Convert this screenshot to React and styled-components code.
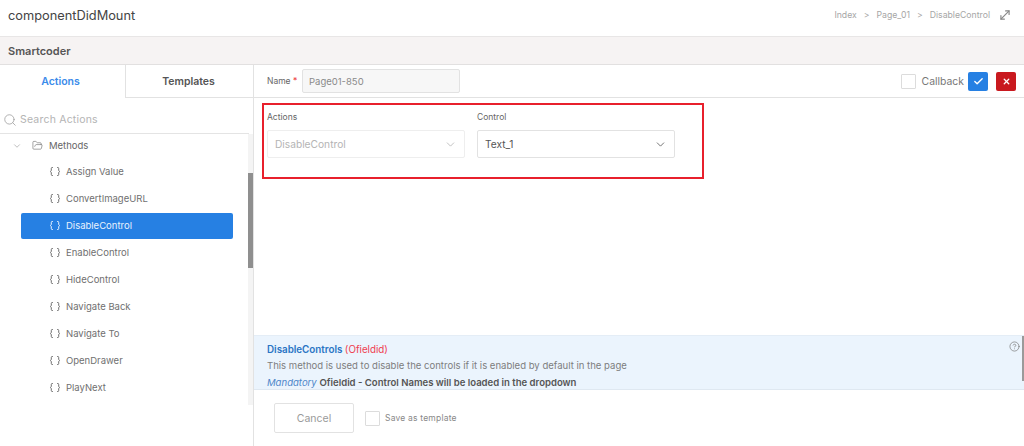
import React from "react";
import styled, { createGlobalStyle } from "styled-components";
import { ChevronDown, Check, X, Search, FolderOpen, MoveDiagonal, CircleHelp } from "lucide-react";

const Global = createGlobalStyle`
  html, body { margin: 0; padding: 0; background: #fff; }
  body { font-family: Inter, "Liberation Sans", sans-serif; color: #555; }
  * { box-sizing: border-box; }
`;

const Page = styled.div`
  width: 1024px;
  height: 446px;
  overflow: hidden;
  display: flex;
  flex-direction: column;
`;
const Header = styled.div`
  height: 37px;
  flex: none;
  display: flex;
  align-items: center;
  justify-content: space-between;
  padding: 0 12px 6px 8px;
  border-bottom: 1px solid #e8e6e6;
`;
const Title = styled.div`
  font-size: 12.8px;
  color: #444;
`;
const Crumbs = styled.div`
  display: flex;
  align-items: center;
  font-size: 8.7px;
  color: #a6a6a6;
  gap: 7px;
  & svg { margin-left: 1px; }
`;
const SubHeader = styled.div`
  height: 28px;
  flex: none;
  display: flex;
  align-items: center;
  padding-left: 8px;
  background: #f6f3f3;
  border-bottom: 1px solid #e2e0e0;
  font-size: 11px;
  font-weight: 600;
  color: #555;
`;
const Body = styled.div`
  flex: 1;
  display: flex;
  min-height: 0;
`;
const Sidebar = styled.div`
  width: 254px;
  flex: none;
  border-right: 1px solid #e2e2e2;
  display: flex;
  flex-direction: column;
`;
const Tabs = styled.div`
  height: 33px;
  flex: none;
  display: flex;
`;
const Tab = styled.div`
  width: ${(p) => (p.$active ? "126px" : "127px")};
  display: flex;
  align-items: center;
  justify-content: center;
  padding-right: ${(p) => (p.$active ? "4px" : "2px")};
  font-size: 10.5px;
  font-weight: 600;
  color: ${(p) => (p.$active ? "#3a8bea" : "#555")};
  border-right: ${(p) => (p.$active ? "1px solid #e2e2e2" : "none")};
  border-bottom: ${(p) => (p.$active ? "none" : "1px solid #e2e2e2")};
`;
const SearchRow = styled.div`
  height: 36px;
  flex: none;
  display: flex;
  align-items: center;
  gap: 3px;
  padding: 8px 0 0 3px;
  border-bottom: 1px solid #e4e4e4;
  margin-right: 4px;
  font-size: 10.5px;
  color: #b4b4b4;
  letter-spacing: 0.2px;
`;
const ListWrap = styled.div`
  height: 271px;
  flex: none;
  display: flex;
`;
const List = styled.div`
  flex: 1;
  overflow: hidden;
`;
const FolderRow = styled.div`
  height: 24px;
  display: flex;
  align-items: center;
  padding: 0 0 1px 12px;
  font-size: 9.5px;
  color: #666;
  & svg:first-child { margin-right: 10px; }
  & svg + svg { margin-right: 6px; }
`;
const Item = styled.div`
  height: 27px;
  display: flex;
  align-items: center;
`;
const ItemInner = styled.div`
  width: 212px;
  height: 26px;
  margin-left: 21px;
  padding-left: 29px;
  display: flex;
  align-items: center;
  gap: 6px;
  font-size: 9.5px;
  border-radius: 2px;
  background: ${(p) => (p.$selected ? "#2680e3" : "transparent")};
  color: ${(p) => (p.$selected ? "#e8f2fd" : "#707070")};
`;
const Track = styled.div`
  width: 5px;
  flex: none;
  background: #f4f4f4;
  padding-top: 39px;
`;
const Thumb = styled.div`
  height: 95px;
  background: #8f8f8f;
`;
const Main = styled.div`
  flex: 1;
  min-width: 0;
  display: flex;
  flex-direction: column;
`;
const NameRow = styled.div`
  height: 33px;
  flex: none;
  display: flex;
  align-items: center;
  padding: 0 8px 0 13px;
  border-bottom: 1px solid #e2e2e2;
`;
const NameLabel = styled.span`
  font-size: 8.5px;
  color: #666;
  width: 35px;
  flex: none;
  & b { color: #ee4444; font-weight: 400; }
`;
const NameInput = styled.div`
  width: 158px;
  height: 24px;
  display: flex;
  align-items: center;
  padding-left: 6px;
  background: #f7f7f7;
  border: 1px solid #e2e2e2;
  border-radius: 2px;
  font-size: 9.5px;
  color: #8a8a8a;
`;
const Spacer = styled.div`
  flex: 1;
`;
const CheckBox = styled.span`
  width: 15px;
  height: 15px;
  flex: none;
  display: block;
  border: 1px solid #dcdcdc;
  border-radius: 1px;
  background: #fff;
`;
const CallbackLabel = styled.span`
  font-size: 10.4px;
  color: #777;
  margin: 0 4px 0 6px;
`;
const IconButton = styled.button`
  width: 20px;
  height: 19px;
  padding: 0;
  margin-left: ${(p) => p.$gap || 0}px;
  display: flex;
  align-items: center;
  justify-content: center;
  border: none;
  border-radius: 2px;
  background: ${(p) => p.$bg};
  color: #fff;
`;
const Content = styled.div`
  height: 237px;
  flex: none;
  padding: 5px 0 0 8px;
`;
const Highlight = styled.div`
  width: 442px;
  height: 76px;
  border: 2px solid #e8202c;
  padding: 7px 0 0 3px;
  display: flex;
  gap: 12px;
`;
const Field = styled.div`
  width: 198px;
  display: flex;
  flex-direction: column;
  gap: 7px;
`;
const FieldLabel = styled.label`
  font-size: 8.5px;
  line-height: 11px;
  color: #666;
`;
const Select = styled.div`
  height: 28px;
  display: flex;
  align-items: center;
  justify-content: space-between;
  padding: 0 7px 0 7px;
  border: 1px solid ${(p) => (p.$disabled ? "#eeeeee" : "#e2e2e2")};
  border-radius: 2px;
  font-size: 10.2px;
  color: ${(p) => (p.$disabled ? "#b4b4b4" : "#555")};
`;
const InfoPanel = styled.div`
  position: relative;
  height: 55px;
  flex: none;
  padding: 6px 0 0 13px;
  background: #ebf4fd;
  border-top: 1px solid #e4edf6;
  border-bottom: 1px solid #dfe8f1;
  font-size: 9.55px;
  line-height: 16px;
  color: #7d7d7d;
`;
const InfoTitle = styled.div`
  font-size: 9.8px;
  font-weight: 600;
  color: #2a74c4;
  & span { color: #ef4050; font-weight: 400; }
`;
const InfoLine = styled.div`
  margin-top: ${(p) => p.$gap || 0}px;
  white-space: nowrap;
  & em { color: #4d86c9; }
  & b { color: #555; font-weight: 600; }
`;
const HelpIcon = styled.span`
  position: absolute;
  top: 5px;
  right: 4px;
  color: #777;
  line-height: 0;
`;
const InfoScroll = styled.span`
  position: absolute;
  top: 0;
  right: 0;
  width: 2px;
  height: 45px;
  background: #9a9a9a;
`;
const Footer = styled.div`
  flex: 1;
  display: flex;
  align-items: flex-start;
  padding: 13px 0 0 20px;
`;
const CancelButton = styled.button`
  width: 80px;
  height: 30px;
  margin-right: 11px;
  background: #fff;
  border: 1px solid #e2e2e2;
  border-radius: 2px;
  font-family: inherit;
  font-size: 10.5px;
  color: #9a9a9a;
`;
const SaveRow = styled.label`
  height: 30px;
  display: flex;
  align-items: center;
  gap: 5px;
  font-size: 8.5px;
  color: #888;
  letter-spacing: 0.2px;
`;

const BracesIcon = () => (
  <svg width="10" height="9" viewBox="0 0 10 9" fill="none" stroke="currentColor" strokeWidth="1">
    <path d="M3 .5H2.2c-.6 0-.9.3-.9.9v1.8c0 .6-.3 1-.9 1.3.6.3.9.7.9 1.3v1.8c0 .6.3.9.9.9H3" />
    <path d="M7 .5h.8c.6 0 .9.3.9.9v1.8c0 .6.3 1 .9 1.3-.6.3-.9.7-.9 1.3v1.8c0 .6-.3.9-.9.9H7" />
  </svg>
);

const actions = ["Assign Value", "ConvertImageURL", "DisableControl", "EnableControl", "HideControl", "Navigate Back", "Navigate To", "OpenDrawer", "PlayNext"];

export default function App() {
  return (
    <Page>
      <Global />
      <Header>
        <Title>componentDidMount</Title>
        <Crumbs>
          <span>Index</span>
          <span>&gt;</span>
          <span>Page_01</span>
          <span>&gt;</span>
          <span>DisableControl</span>
          <MoveDiagonal size={14} color="#888" strokeWidth={2} />
        </Crumbs>
      </Header>
      <SubHeader>Smartcoder</SubHeader>
      <Body>
        <Sidebar>
          <Tabs>
            <Tab $active>Actions</Tab>
            <Tab>Templates</Tab>
          </Tabs>
          <SearchRow>
            <Search size={14} color="#999" strokeWidth={1.3} />
            Search Actions
          </SearchRow>
          <ListWrap>
            <List>
              <FolderRow>
                <ChevronDown size={10} color="#888" strokeWidth={1.3} />
                <FolderOpen size={11} color="#666" strokeWidth={1.3} />
                Methods
              </FolderRow>
              {actions.map((name) => {
                const selected = name === "DisableControl";
                return (
                  <Item key={name}>
                    <ItemInner $selected={selected}>
                      <BracesIcon />
                      {name}
                    </ItemInner>
                  </Item>
                );
              })}
            </List>
            <Track>
              <Thumb />
            </Track>
          </ListWrap>
        </Sidebar>
        <Main>
          <NameRow>
            <NameLabel>Name <b>*</b></NameLabel>
            <NameInput>Page01-850</NameInput>
            <Spacer />
            <CheckBox />
            <CallbackLabel>Callback</CallbackLabel>
            <IconButton $bg="#2680e3"><Check size={11} strokeWidth={3} /></IconButton>
            <IconButton $bg="#c9191f" $gap={8}><X size={9} strokeWidth={3.5} /></IconButton>
          </NameRow>
          <Content>
            <Highlight>
              <Field>
                <FieldLabel>Actions</FieldLabel>
                <Select $disabled>
                  DisableControl
                  <ChevronDown size={13} color="#aaa" strokeWidth={1.3} />
                </Select>
              </Field>
              <Field>
                <FieldLabel>Control</FieldLabel>
                <Select>
                  Text_1
                  <ChevronDown size={13} color="#555" strokeWidth={1.5} />
                </Select>
              </Field>
            </Highlight>
          </Content>
          <InfoPanel>
            <InfoTitle>DisableControls <span>(Ofieldid)</span></InfoTitle>
            <InfoLine>This method is used to disable the controls if it is enabled by default in the page</InfoLine>
            <InfoLine $gap={1}><em>Mandatory</em> <b>Ofieldid - Control Names will be loaded in the dropdown</b></InfoLine>
            <HelpIcon><CircleHelp size={11} strokeWidth={1.5} /></HelpIcon>
            <InfoScroll />
          </InfoPanel>
          <Footer>
            <CancelButton>Cancel</CancelButton>
            <SaveRow>
              <CheckBox />
              Save as template
            </SaveRow>
          </Footer>
        </Main>
      </Body>
    </Page>
  );
}
